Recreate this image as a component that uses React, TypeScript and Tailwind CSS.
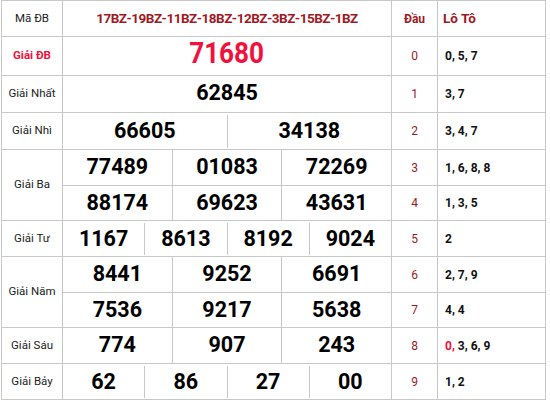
import React from "react";

const RED = "text-[#f0123c]";
const DARK = "text-[#9e1a1f]";

function Num({ v }: { v: string }) {
  return <span className="text-[21.5px] font-bold leading-none text-black">{v}</span>;
}

function Label({ t, red }: { t: string; red?: boolean }) {
  return (
    <div className="bg-white flex items-center justify-center">
      <span className={red ? `text-[11.5px] font-bold ${RED}` : "text-[11.5px] text-[#222]"}>{t}</span>
    </div>
  );
}

function Dau({ d }: { d: string }) {
  return (
    <div className="bg-white flex items-center justify-center">
      <span className={`text-[12px] ${DARK}`}>{d}</span>
    </div>
  );
}

function Loto({ children }: { children: React.ReactNode }) {
  return (
    <div className="bg-white flex items-center pl-[7px]">
      <span className="text-[12px] font-bold text-[#111]">{children}</span>
    </div>
  );
}

function InsetRow({ nums }: { nums: string[] }) {
  return (
    <div className="bg-white flex pt-[2px] pb-px">
      {nums.map((n, i) => (
        <div
          key={i}
          className={
            "flex-1 flex items-center justify-center pb-px " + (i > 0 ? "border-l border-[#c8c8c8]" : "")
          }
        >
          <Num v={n} />
        </div>
      ))}
    </div>
  );
}

function FullRow({ nums }: { nums: string[] }) {
  return (
    <div className="bg-[#c8c8c8] grid grid-cols-3 gap-px">
      {nums.map((n, i) => (
        <div key={i} className="bg-white flex items-center justify-center pb-px">
          <Num v={n} />
        </div>
      ))}
    </div>
  );
}

function DoubleRow({ nums }: { nums: string[] }) {
  return (
    <div className="bg-[#c8c8c8] grid grid-cols-3 grid-rows-[35px_34px] gap-px">
      {nums.map((n, i) => (
        <div key={i} className="bg-white flex items-center justify-center pb-px">
          <Num v={n} />
        </div>
      ))}
    </div>
  );
}

export default function App() {
  return (
    <div className="bg-white w-[550px] h-[403px] font-[Roboto,sans-serif]">
      <div className="ml-px w-fit bg-[#c8c8c8] p-px gap-px grid grid-cols-[60px_328px_45px_107px] grid-rows-[35px_38px_36px_36px_35px_34px_35px_35px_34px_35px_35px]">
        {/* header */}
        <Label t="Mã ĐB" />
        <div className="bg-white flex items-center justify-center">
          <span className={`text-[13.5px] font-bold tracking-[-0.5px] ${DARK}`}>
            17BZ-19BZ-11BZ-18BZ-12BZ-3BZ-15BZ-1BZ
          </span>
        </div>
        <div className="bg-white flex items-center justify-center">
          <span className={`text-[12px] font-bold ${DARK}`}>Đầu</span>
        </div>
        <div className="bg-white flex items-center pl-[5px]">
          <span className={`text-[13.5px] font-bold ${DARK}`}>Lô Tô</span>
        </div>

        {/* DB */}
        <Label t="Giải ĐB" red />
        <div className="bg-white flex items-center justify-center pb-[6px]">
          <span className={`inline-block scale-x-[0.9] text-[29px] font-bold leading-none ${RED}`}>71680</span>
        </div>
        <Dau d="0" />
        <Loto>0, 5, 7</Loto>

        {/* Nhat */}
        <Label t="Giải Nhất" />
        <div className="bg-white flex items-center justify-center pb-[3px]">
          <Num v="62845" />
        </div>
        <Dau d="1" />
        <Loto>3, 7</Loto>

        {/* Nhi */}
        <Label t="Giải Nhì" />
        <InsetRow nums={["66605", "34138"]} />
        <Dau d="2" />
        <Loto>3, 4, 7</Loto>

        {/* Ba */}
        <div className="row-span-2 bg-white flex items-center justify-center">
          <span className="text-[11.5px] text-[#222]">Giải Ba</span>
        </div>
        <div className="row-span-2 flex">
          <div className="flex-1">
            <DoubleRow nums={["77489", "01083", "72269", "88174", "69623", "43631"]} />
          </div>
        </div>
        <Dau d="3" />
        <Loto>1, 6, 8, 8</Loto>
        <Dau d="4" />
        <Loto>1, 3, 5</Loto>

        {/* Tu */}
        <Label t="Giải Tư" />
        <InsetRow nums={["1167", "8613", "8192", "9024"]} />
        <Dau d="5" />
        <Loto>2</Loto>

        {/* Nam */}
        <div className="row-span-2 bg-white flex items-center justify-center">
          <span className="text-[11.5px] text-[#222]">Giải Năm</span>
        </div>
        <div className="row-span-2 flex">
          <div className="flex-1">
            <DoubleRow nums={["8441", "9252", "6691", "7536", "9217", "5638"]} />
          </div>
        </div>
        <Dau d="6" />
        <Loto>2, 7, 9</Loto>
        <Dau d="7" />
        <Loto>4, 4</Loto>

        {/* Sau */}
        <Label t="Giải Sáu" />
        <FullRow nums={["774", "907", "243"]} />
        <Dau d="8" />
        <Loto>
          <span className={RED}>0,</span> 3, 6, 9
        </Loto>

        {/* Bay */}
        <Label t="Giải Bảy" />
        <InsetRow nums={["62", "86", "27", "00"]} />
        <Dau d="9" />
        <Loto>1, 2</Loto>
      </div>
    </div>
  );
}
